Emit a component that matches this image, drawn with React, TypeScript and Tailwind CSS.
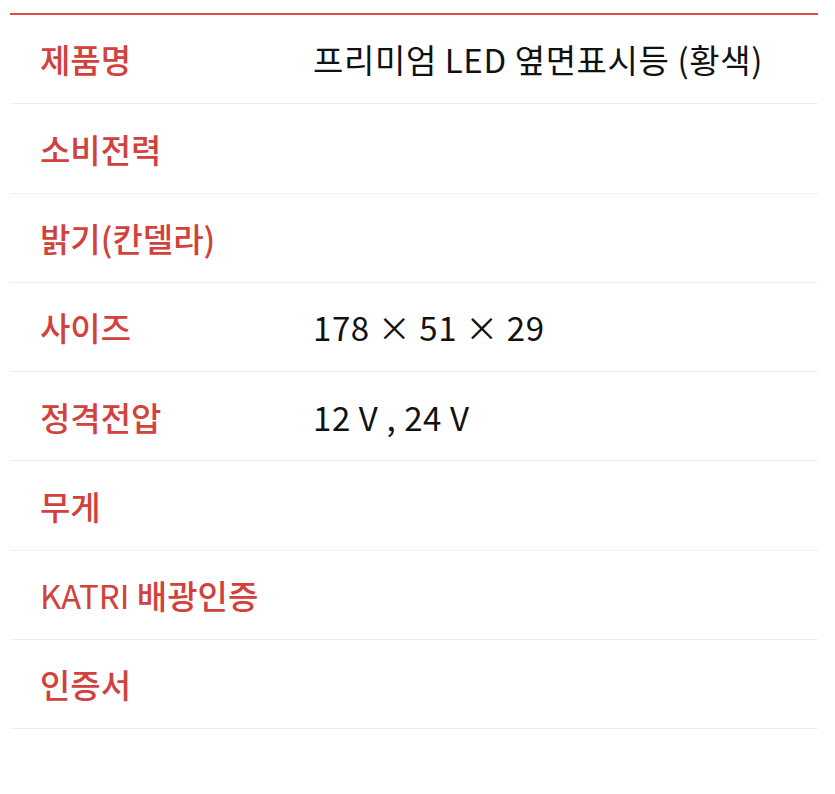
const rows: { label: string; latin?: string; value?: string }[] = [
  { label: "제품명", value: "프리미엄 LED 옆면표시등 (황색)" },
  { label: "소비전력" },
  { label: "밝기(칸델라)" },
  { label: "사이즈", value: "178 × 51 × 29" },
  { label: "정격전압", value: "12 V , 24 V" },
  { label: "무게" },
  { label: "배광인증", latin: "KATRI " },
  { label: "인증서" },
];

export default function App() {
  return (
    <div
      className="min-h-[794px] w-[835px] bg-white pt-[13px]"
      style={{ fontFamily: '"Noto Sans CJK KR", "Noto Sans", sans-serif' }}
    >
      <div className="mx-[10px] w-[808px] border-t-2 border-[#d4514c]">
        {rows.map((row) => (
          <div
            key={row.label}
            className="flex h-[89.3px] items-center border-b border-[#eeeeee] pt-[2px]"
          >
            <div className="w-[303px] pl-[30px] text-[33px] font-medium text-[#d2413b]">
              {row.latin && <span className="font-normal">{row.latin}</span>}
              {row.label}
            </div>
            <div className="flex-1 text-[33px] text-[#111111] tracking-[0.6px]">
              {row.value}
            </div>
          </div>
        ))}
      </div>
    </div>
  );
}
